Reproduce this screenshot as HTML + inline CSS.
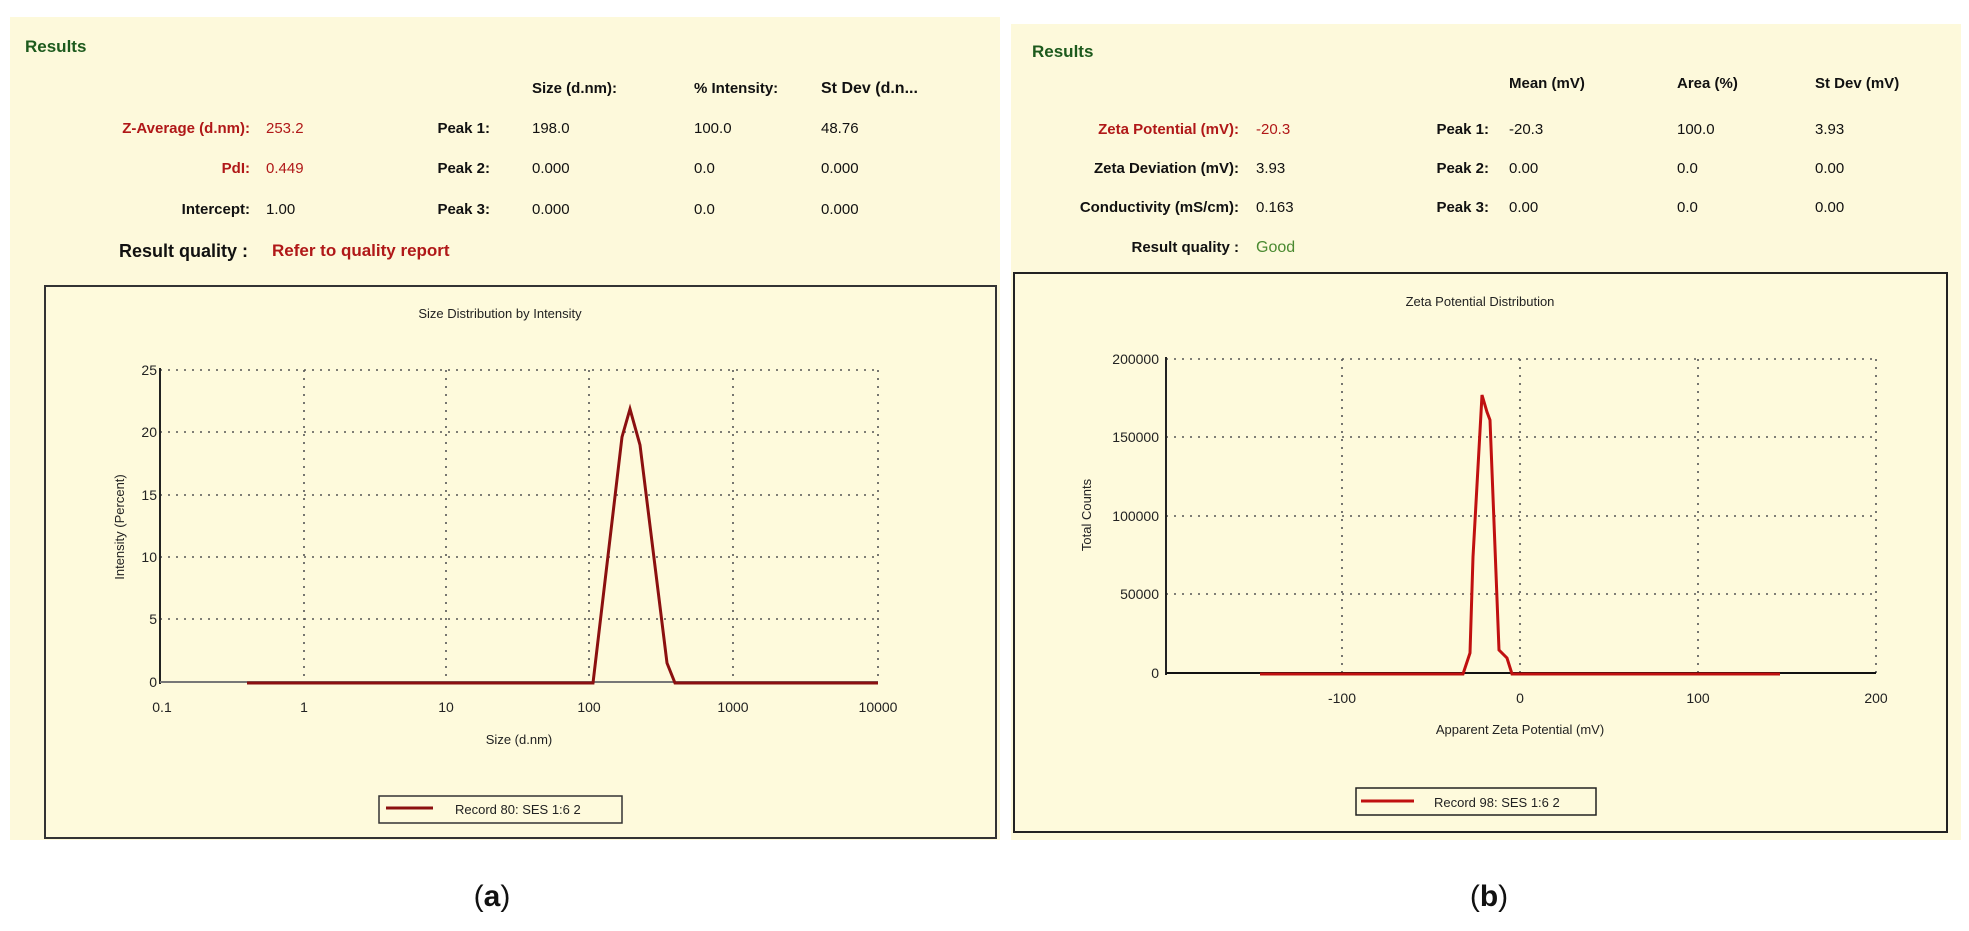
<!DOCTYPE html>
<html><head><meta charset="utf-8"><style>
html,body{margin:0;padding:0;background:#fff;width:1969px;height:931px;overflow:hidden}
svg{display:block}
text{font-family:"Liberation Sans",sans-serif}
</style></head><body>
<svg width="1969" height="931" viewBox="0 0 1969 931" xmlns="http://www.w3.org/2000/svg">
<!-- LEFT PANEL -->
<rect x="10" y="17" width="990" height="823" fill="#fdf9db"/>
<text x="25" y="52" font-size="17" font-weight="bold" fill="#1d5a1d">Results</text>
<g font-size="15" font-weight="bold" fill="#111">
<text x="532" y="93">Size (d.nm):</text>
<text x="694" y="93">% Intensity:</text>
<text x="821" y="93" font-size="16">St Dev (d.n...</text>
<text x="250" y="133" text-anchor="end" fill="#b01818">Z-Average (d.nm):</text>
<text x="250" y="173" text-anchor="end" fill="#b01818">PdI:</text>
<text x="250" y="214" text-anchor="end">Intercept:</text>
<text x="490" y="133" text-anchor="end">Peak 1:</text>
<text x="490" y="173" text-anchor="end">Peak 2:</text>
<text x="490" y="214" text-anchor="end">Peak 3:</text>
</g>
<g font-size="15" fill="#111">
<text x="266" y="133" fill="#b01818">253.2</text>
<text x="266" y="173" fill="#b01818">0.449</text>
<text x="266" y="214">1.00</text>
<text x="532" y="133">198.0</text><text x="694" y="133">100.0</text><text x="821" y="133">48.76</text>
<text x="532" y="173">0.000</text><text x="694" y="173">0.0</text><text x="821" y="173">0.000</text>
<text x="532" y="214">0.000</text><text x="694" y="214">0.0</text><text x="821" y="214">0.000</text>
</g>
<text x="248" y="257" text-anchor="end" font-size="18" font-weight="bold" fill="#111">Result quality :</text>
<text x="272" y="256" font-size="17" font-weight="bold" fill="#b01818">Refer to quality report</text>

<rect x="45" y="286" width="951" height="552" fill="#fefadc" stroke="#333" stroke-width="2"/>
<text x="500" y="318" text-anchor="middle" font-size="13" fill="#222">Size Distribution by Intensity</text>
<g stroke="#555" stroke-width="1.6" stroke-dasharray="2,6">
<line x1="160" y1="370" x2="878" y2="370"/><line x1="160" y1="432" x2="878" y2="432"/>
<line x1="160" y1="495" x2="878" y2="495"/><line x1="160" y1="557" x2="878" y2="557"/>
<line x1="160" y1="619" x2="878" y2="619"/>
<line x1="304" y1="370" x2="304" y2="682"/><line x1="446" y1="370" x2="446" y2="682"/>
<line x1="589" y1="370" x2="589" y2="682"/><line x1="733" y1="370" x2="733" y2="682"/>
<line x1="878" y1="370" x2="878" y2="682"/>
</g>
<line x1="160" y1="368" x2="160" y2="684" stroke="#222" stroke-width="2"/>
<line x1="160" y1="682" x2="878" y2="682" stroke="#777" stroke-width="2"/>
<polyline points="247,683 593,683 622,437 630,409 640,445 667,663 675,683 878,683" fill="none" stroke="#8b1010" stroke-width="3"/>
<g font-size="14" fill="#222" text-anchor="end">
<text x="157" y="375">25</text><text x="157" y="437">20</text><text x="157" y="500">15</text>
<text x="157" y="562">10</text><text x="157" y="624">5</text><text x="157" y="687">0</text>
</g>
<g font-size="14" fill="#222" text-anchor="middle">
<text x="162" y="712">0.1</text><text x="304" y="712">1</text><text x="446" y="712">10</text>
<text x="589" y="712">100</text><text x="733" y="712">1000</text><text x="878" y="712">10000</text>
<text x="519" y="744" font-size="13">Size (d.nm)</text>
</g>
<text transform="translate(124,527) rotate(-90)" text-anchor="middle" font-size="13" fill="#222">Intensity (Percent)</text>
<rect x="379" y="796" width="243" height="27" fill="#fefadc" stroke="#333" stroke-width="1.5"/>
<line x1="386" y1="808" x2="433" y2="808" stroke="#8b1010" stroke-width="3"/>
<text x="455" y="814" font-size="13" fill="#222">Record 80: SES 1:6 2</text>

<!-- RIGHT PANEL -->
<rect x="1011" y="24" width="950" height="816" fill="#fdf9db"/>
<text x="1032" y="57" font-size="17" font-weight="bold" fill="#1d5a1d">Results</text>
<g font-size="15" font-weight="bold" fill="#111">
<text x="1509" y="88">Mean (mV)</text>
<text x="1677" y="88">Area (%)</text>
<text x="1815" y="88">St Dev (mV)</text>
<text x="1239" y="134" text-anchor="end" fill="#b01818">Zeta Potential (mV):</text>
<text x="1239" y="173" text-anchor="end">Zeta Deviation (mV):</text>
<text x="1239" y="212" text-anchor="end">Conductivity (mS/cm):</text>
<text x="1489" y="134" text-anchor="end">Peak 1:</text>
<text x="1489" y="173" text-anchor="end">Peak 2:</text>
<text x="1489" y="212" text-anchor="end">Peak 3:</text>
<text x="1239" y="252" text-anchor="end">Result quality :</text>
</g>
<g font-size="15" fill="#111">
<text x="1256" y="134" fill="#b01818">-20.3</text>
<text x="1256" y="173">3.93</text>
<text x="1256" y="212">0.163</text>
<text x="1256" y="252" fill="#4a8a30" font-size="16">Good</text>
<text x="1509" y="134">-20.3</text><text x="1677" y="134">100.0</text><text x="1815" y="134">3.93</text>
<text x="1509" y="173">0.00</text><text x="1677" y="173">0.0</text><text x="1815" y="173">0.00</text>
<text x="1509" y="212">0.00</text><text x="1677" y="212">0.0</text><text x="1815" y="212">0.00</text>
</g>
<rect x="1014" y="273" width="933" height="559" fill="#fefadc" stroke="#222" stroke-width="2"/>
<text x="1480" y="306" text-anchor="middle" font-size="13" fill="#222">Zeta Potential Distribution</text>
<g stroke="#555" stroke-width="1.6" stroke-dasharray="2,6">
<line x1="1166" y1="359" x2="1876" y2="359"/>
<line x1="1166" y1="437" x2="1876" y2="437"/>
<line x1="1166" y1="516" x2="1876" y2="516"/>
<line x1="1166" y1="594" x2="1876" y2="594"/>
<line x1="1342" y1="359" x2="1342" y2="673"/><line x1="1520" y1="359" x2="1520" y2="673"/>
<line x1="1698" y1="359" x2="1698" y2="673"/><line x1="1876" y1="359" x2="1876" y2="673"/>
</g>
<line x1="1166" y1="357" x2="1166" y2="675" stroke="#222" stroke-width="2"/>
<line x1="1166" y1="673" x2="1876" y2="673" stroke="#111" stroke-width="2"/>
<polyline points="1260,674 1463,674 1470,653 1473,557 1482,395 1487,412 1490,420 1499,650 1507,658 1512,674 1780,674" fill="none" stroke="#c01010" stroke-width="3"/>
<g font-size="14" fill="#222" text-anchor="end">
<text x="1159" y="364">200000</text><text x="1159" y="442">150000</text>
<text x="1159" y="521">100000</text><text x="1159" y="599">50000</text><text x="1159" y="678">0</text>
</g>
<g font-size="14" fill="#222" text-anchor="middle">
<text x="1342" y="703">-100</text><text x="1520" y="703">0</text>
<text x="1698" y="703">100</text><text x="1876" y="703">200</text>
<text x="1520" y="734" font-size="13">Apparent Zeta Potential (mV)</text>
</g>
<text transform="translate(1091,515) rotate(-90)" text-anchor="middle" font-size="13" fill="#222">Total Counts</text>
<rect x="1356" y="788" width="240" height="27" fill="#fefadc" stroke="#222" stroke-width="1.5"/>
<line x1="1361" y1="801" x2="1414" y2="801" stroke="#c01010" stroke-width="3"/>
<text x="1434" y="807" font-size="13" fill="#222">Record 98: SES 1:6 2</text>

<!-- labels -->
<text x="492" y="906" text-anchor="middle" font-family="Liberation Serif,serif" font-size="30" fill="#111">(<tspan font-weight="bold">a</tspan>)</text>
<text x="1489" y="906" text-anchor="middle" font-family="Liberation Serif,serif" font-size="30" fill="#111">(<tspan font-weight="bold">b</tspan>)</text>
</svg>
</body></html>
